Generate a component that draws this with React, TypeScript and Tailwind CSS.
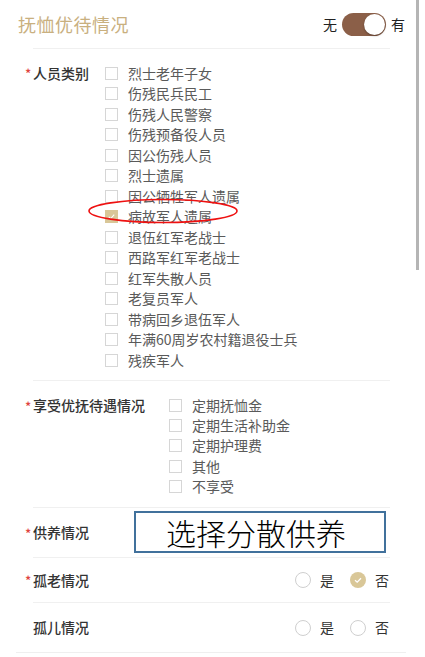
import React from "react";

const font = { fontFamily: '"Noto Sans CJK SC", "Noto Sans", sans-serif' };

const people = [
  "烈士老年子女",
  "伤残民兵民工",
  "伤残人民警察",
  "伤残预备役人员",
  "因公伤残人员",
  "烈士遗属",
  "因公牺牲军人遗属",
  "病故军人遗属",
  "退伍红军老战士",
  "西路军红军老战士",
  "红军失散人员",
  "老复员军人",
  "带病回乡退伍军人",
  "年满60周岁农村籍退役士兵",
  "残疾军人",
];

const benefits = ["定期抚恤金", "定期生活补助金", "定期护理费", "其他", "不享受"];

function Box({ checked }: { checked?: boolean }) {
  return checked ? (
    <span className="w-[13px] h-[13px] bg-[#d9c798] flex items-center justify-center shrink-0">
      <svg width="9" height="9" viewBox="0 0 10 10">
        <path d="M2 5.5 L4 7.5 L8 3" stroke="#fff" strokeWidth="1.2" fill="none" />
      </svg>
    </span>
  ) : (
    <span className="w-[13px] h-[13px] border border-[#d6d6d6] bg-white shrink-0" />
  );
}

function Star() {
  return <span className="text-[#e0443e] text-[13px] leading-none w-[8px] mt-[1px]">*</span>;
}

function Divider() {
  return <div className="h-px bg-[#f0f0f0] ml-[33px] mr-[35px]" />;
}

function Radio({ checked }: { checked?: boolean }) {
  return checked ? (
    <span className="w-[16px] h-[16px] rounded-full bg-[#d9c798] flex items-center justify-center">
      <svg width="10" height="10" viewBox="0 0 10 10">
        <path d="M2 5.2 L4.2 7.2 L8 3.2" stroke="#fff" strokeWidth="1.3" fill="none" />
      </svg>
    </span>
  ) : (
    <span className="w-[16px] h-[16px] rounded-full border border-[#cfcfcf] bg-white" />
  );
}

export default function App() {
  return (
    <div className="relative w-[425px] h-[657px] bg-white overflow-hidden text-[#333]" style={font}>
      {/* scrollbar */}
      <div className="absolute right-[6px] top-0 w-[3px] h-[270px] bg-[#b5b5b5]" />

      {/* header */}
      <div className="h-[48px] flex items-center justify-between pl-[18px] pr-[20px]">
        <span className="text-[18px] text-[#c9b07f] tracking-[0.5px]">抚恤优待情况</span>
        <div className="flex items-center gap-[5px] text-[14px] text-[#222]">
          <span>无</span>
          <span className="w-[44px] h-[23px] rounded-full bg-[#8b5f48] flex items-center justify-end pr-[1px]">
            <span className="w-[21px] h-[21px] rounded-full bg-white shadow-[0_1px_2px_rgba(0,0,0,0.35)]" />
          </span>
          <span>有</span>
        </div>
      </div>
      <Divider />

      {/* 人员类别 */}
      <div className="flex pl-[25px] pt-[14px] pb-[9px]">
        <div className="w-[80px] h-[20.5px] flex items-center text-[14px] font-medium text-[#333]">
          <Star />
          <span>人员类别</span>
        </div>
        <div className="flex flex-col">
          {people.map((p, i) => (
            <div key={p} className="h-[20.5px] flex items-center gap-[10px] text-[14px] text-[#5a5a5a]">
              <Box checked={i === 7} />
              <span>{p}</span>
            </div>
          ))}
        </div>
      </div>
      <Divider />

      {/* 享受优抚待遇情况 */}
      <div className="flex pl-[25px] pt-[15px] pb-[11px]">
        <div className="w-[144px] h-[20.2px] flex items-center text-[14px] font-medium text-[#333]">
          <Star />
          <span>享受优抚待遇情况</span>
        </div>
        <div className="flex flex-col">
          {benefits.map((p) => (
            <div key={p} className="h-[20.2px] flex items-center gap-[10px] text-[14px] text-[#5a5a5a]">
              <Box />
              <span>{p}</span>
            </div>
          ))}
        </div>
      </div>
      <Divider />

      {/* 供养情况 */}
      <div className="relative h-[49px] flex items-center pl-[25px] text-[14px] font-medium">
        <Star />
        <span>供养情况</span>
        <div className="absolute left-[134px] top-[3px] w-[252px] h-[42px] border-2 border-[#41719c] flex items-center justify-center">
          <span className="text-[30px] text-black leading-none -ml-[8px]" style={{ fontFamily: '"Noto Sans CJK SC", sans-serif', fontWeight: 300 }}>
            选择分散供养
          </span>
        </div>
      </div>
      <Divider />

      {/* 孤老情况 */}
      <div className="h-[44px] flex items-center justify-between pl-[25px] pr-[36px] text-[14px]">
        <div className="flex items-center font-medium">
          <Star />
          <span>孤老情况</span>
        </div>
        <div className="flex items-center">
          <Radio />
          <span className="ml-[9px] mr-[16px]">是</span>
          <Radio checked />
          <span className="ml-[9px]">否</span>
        </div>
      </div>
      <Divider />

      {/* 孤儿情况 */}
      <div className="h-[49px] flex items-center justify-between pl-[33px] pr-[36px] text-[14px]">
        <span className="font-medium">孤儿情况</span>
        <div className="flex items-center">
          <Radio />
          <span className="ml-[9px] mr-[16px]">是</span>
          <Radio />
          <span className="ml-[9px]">否</span>
        </div>
      </div>
      <div className="h-px bg-[#efefef] ml-[16px] mr-[19px]" />

      {/* red annotation ellipse */}
      <svg className="absolute left-[86px] top-[196px]" width="154" height="30" viewBox="0 0 154 30">
        <ellipse cx="77" cy="15" rx="74" ry="11.5" fill="none" stroke="#e11" strokeWidth="1.6" />
      </svg>
    </div>
  );
}
